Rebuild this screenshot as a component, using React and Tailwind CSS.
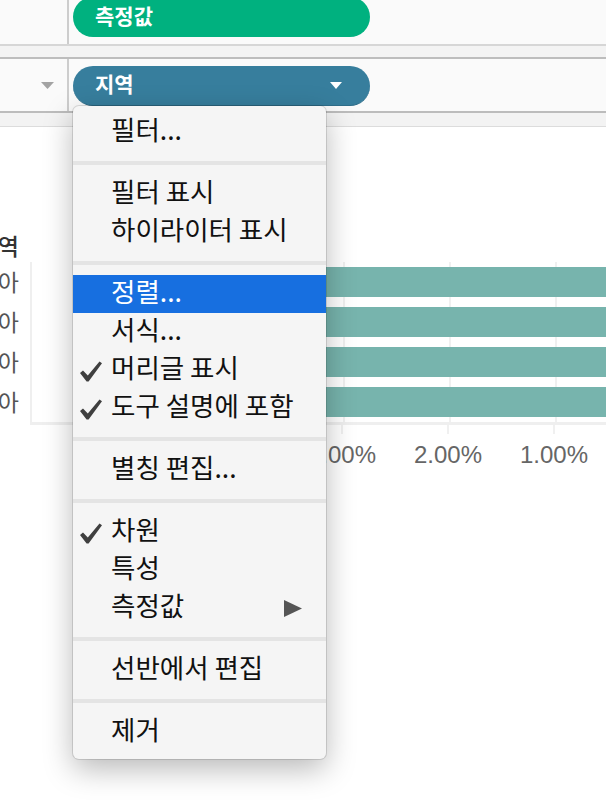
import React from 'react';

const menuGroups = [
  [{ label: '필터...' }],
  [{ label: '필터 표시' }, { label: '하이라이터 표시' }],
  [
    { label: '정렬...', active: true },
    { label: '서식...' },
    { label: '머리글 표시', checked: true },
    { label: '도구 설명에 포함', checked: true },
  ],
  [{ label: '별칭 편집...' }],
  [{ label: '차원', checked: true }, { label: '특성' }, { label: '측정값', submenu: true }],
  [{ label: '선반에서 편집' }],
  [{ label: '제거' }],
];

const rows = [
  { name: '동남아시아', value: 4.2 },
  { name: '중앙아시아', value: 3.83 },
  { name: '서아시아', value: 3.6 },
  { name: '동아시아', value: 3.5 },
];

// 1% = 106px, 0% sits at x=660 (off to the right)
const ticks = [5, 4, 3, 2, 1];
const STEP = 106;
const PANE_W = 630;

const Check = () => (
  <svg width="22" height="21" viewBox="0 0 22 21" className="mt-[9px]">
    <polygon points="0,12 3,9.5 7.8,14.5 19.5,0.5 22,2.3 8.6,20.5 6.6,20.5" fill="#3f3f3f" />
  </svg>
);

function MenuItem({ item }) {
  return (
    <div
      className={`flex h-[38px] items-center pb-[6px] ${
        item.active ? 'bg-[#176fe0] text-white' : 'text-[#111]'
      }`}
    >
      <div className="flex w-[38px] shrink-0 pl-[7px]">{item.checked && <Check />}</div>
      <span className="whitespace-nowrap">{item.label}</span>
      {item.submenu && (
        <svg width="18" height="17" viewBox="0 0 18 17" className="ml-auto mr-[24px] mt-[6px]">
          <polygon points="0,0 18,8.5 0,17" fill="#555" />
        </svg>
      )}
    </div>
  );
}

export default function App() {
  return (
    <div className="relative h-[810px] w-[606px] overflow-hidden bg-white font-['Noto_Sans_CJK_KR','Noto_Sans',sans-serif]">
      {/* shelves */}
      <div className="flex h-[44px] bg-[#fafafa]">
        <div className="w-[69px] shrink-0 border-r-2 border-[#cdcdcd]" />
        <div className="ml-[4px] -mt-[3px] flex h-[40px] w-[297px] items-center rounded-full bg-[#00b17f] pl-[22px] pb-[3px] text-[21px] font-bold text-white">
          측정값
        </div>
      </div>
      <div className="h-[2px] bg-[#d6d6d6]" />
      <div className="h-[11px] bg-[#f3f3f3]" />
      <div className="h-[2px] bg-[#bdbdbd]" />
      <div className="flex h-[52px] bg-[#fafafa]">
        <div className="flex w-[69px] shrink-0 items-center border-r-2 border-[#cdcdcd] pl-[41px]">
          <svg width="13" height="7" viewBox="0 0 13 7">
            <polygon points="0,0 13,0 6.5,7" fill="#a3a3a3" />
          </svg>
        </div>
        <div className="ml-[4px] mt-[7px] flex h-[40px] w-[297px] items-center rounded-full border-b border-[#2f6e8a] bg-[#377e9d] pl-[22px] pr-[28px] pb-[3px] text-[21px] font-bold text-white">
          <span>지역</span>
          <svg width="12" height="7" viewBox="0 0 12 7" className="ml-auto mt-[3px]">
            <polygon points="0,0 12,0 6,7" fill="#fff" />
          </svg>
        </div>
      </div>
      <div className="h-[2px] bg-[#bcbcbc]" />
      <div className="h-[13px] bg-[#f3f3f3]" />
      <div className="h-[1px] bg-[#dcdcdc]" />

      {/* chart */}
      <div className="mt-[105px] flex h-[26px] w-[30px] items-center justify-end overflow-hidden pr-[11px]">
        <span className="whitespace-nowrap text-[23px] font-medium text-[#333]">지역</span>
      </div>
      <div className="mt-[4px] flex">
        <div className="flex w-[30px] shrink-0 flex-col">
          {rows.map((r) => (
            <div key={r.name} className="flex h-[40px] items-center justify-end overflow-hidden pr-[11px] pb-[2px]">
              <span className="whitespace-nowrap text-[23px] text-[#555]">{r.name}</span>
            </div>
          ))}
        </div>
        <div className="shrink-0" style={{ width: PANE_W }}>
          <div className="relative border-b-[3px] border-l-2 border-[#efefef]">
            {ticks.map((t) => (
              <div
                key={t}
                className="absolute top-0 bottom-0 w-[2px] bg-[#f0f0f0]"
                style={{ left: PANE_W - t * STEP - 1 }}
              />
            ))}
            {rows.map((r) => (
              <div key={r.name} className="relative flex h-[40px] items-center justify-end">
                <div className="h-[30px] bg-[#77b4ad]" style={{ width: r.value * STEP }} />
              </div>
            ))}
          </div>
          <div className="relative h-[50px] font-['Liberation_Sans',Arial,sans-serif]">
            {ticks.map((t) => (
              <div key={t}>
                <div className="absolute top-0 h-[9px] w-[2px] bg-[#f0f0f0]" style={{ left: PANE_W - t * STEP - 1 }} />
                <div
                  className="absolute top-[18px] -translate-x-1/2 whitespace-nowrap text-[24px] leading-none text-[#666]"
                  style={{ left: PANE_W - t * STEP }}
                >
                  {t}.00%
                </div>
              </div>
            ))}
          </div>
        </div>
      </div>

      {/* context menu */}
      <div className="absolute left-[73px] top-[106px] w-[253px] rounded-[6px] bg-[#f5f5f5] pt-[7px] pb-[8px] text-[26.5px] font-normal shadow-[0_10px_30px_rgba(0,0,0,0.28),0_0_0_1px_rgba(0,0,0,0.12)]">
        {menuGroups.map((group, gi) => (
          <div key={gi}>
            {gi > 0 && <div className="my-[10px] h-[4px] bg-[#e4e4e4]" />}
            {group.map((item) => (
              <MenuItem key={item.label} item={item} />
            ))}
          </div>
        ))}
      </div>
    </div>
  );
}
